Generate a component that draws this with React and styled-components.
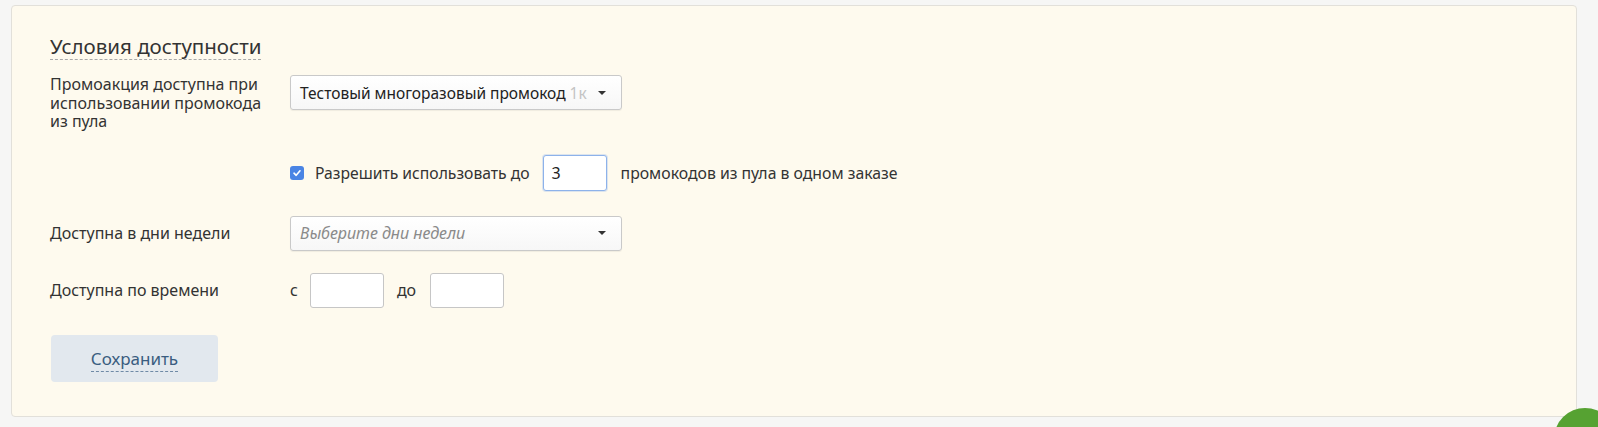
import React from "react";
import styled, { createGlobalStyle } from "styled-components";

const Global = createGlobalStyle`
  html, body { margin: 0; padding: 0; background: #f6f6f5; }
  body { font-family: "Noto Sans", "Open Sans", sans-serif; color: #333; }
`;

const Page = styled.div`
  padding: 5px 21px 10px 11px;
  position: relative;
  height: 427px;
  box-sizing: border-box;
  overflow: hidden;
`;

const Panel = styled.section`
  background: #fefaee;
  border: 1px solid #e2e0da;
  border-radius: 4px;
  height: 412px;
  box-sizing: border-box;
  padding: 27px 37px 0 38px;
`;

const Title = styled.h2`
  margin: 0;
  font-size: 20.5px;
  font-weight: 400;
  line-height: 26px;
  color: #333;
  display: inline-block;
  border-bottom: 1px dashed #a8a8a8;
`;

const Row = styled.div`
  display: flex;
  align-items: ${(p) => (p.$top ? "flex-start" : "center")};
  margin-top: ${(p) => p.$mt}px;
`;

const Label = styled.div`
  width: 240px;
  flex: none;
  font-size: 16px;
  line-height: 18.5px;
  color: #333;
`;

const Select = styled.div`
  width: 332px;
  height: 35px;
  box-sizing: border-box;
  background: linear-gradient(#ffffff, #f7f7f7);
  border: 1px solid #c9c9c9;
  border-radius: 3px;
  box-shadow: 0 1px 1px rgba(0, 0, 0, 0.06);
  display: flex;
  align-items: center;
  padding: 0 15px 0 9px;
  font-size: ${(p) => (p.$placeholder ? "16px" : "15.5px")};
  color: ${(p) => (p.$placeholder ? "#8a8a8a" : "#222")};
  font-style: ${(p) => (p.$placeholder ? "italic" : "normal")};
`;

const SelectText = styled.span`
  flex: 1;
  white-space: nowrap;
`;

const Faded = styled.span`
  color: #c4c4c4;
`;

const Caret = styled.span`
  width: 0;
  height: 0;
  border-left: 4px solid transparent;
  border-right: 4px solid transparent;
  border-top: 4px solid #333;
  flex: none;
  margin-left: 8px;
`;

const CheckGroup = styled.div`
  display: flex;
  align-items: center;
  margin-left: 240px;
  margin-top: ${(p) => p.$mt}px;
  color: #333;
`;

const Check = styled.span`
  width: 14px;
  height: 14px;
  border-radius: 3px;
  background: #4a84e4;
  display: inline-flex;
  align-items: center;
  justify-content: center;
  margin-right: 11px;
`;

const TextInput = styled.div`
  width: ${(p) => p.$w}px;
  height: ${(p) => p.$h}px;
  box-sizing: border-box;
  background: #fff;
  border: 1px solid ${(p) => (p.$focus ? "#8db2ea" : "#c6c6c6")};
  box-shadow: ${(p) => (p.$focus ? "0 0 0 1px rgba(120,165,235,0.25)" : "none")};
  border-radius: 3px;
  padding: 0 8px;
  display: flex;
  align-items: center;
  font-size: 16px;
  color: #222;
  margin: ${(p) => p.$m || "0"};
`;

const Word = styled.span`
  font-size: ${(p) => p.$size || 16}px;
  color: #333;
`;

const SaveButton = styled.button`
  margin-top: 27px;
  margin-left: 1px;
  width: 167px;
  height: 47px;
  border: none;
  border-radius: 4px;
  background: #e2e8ee;
  font-family: inherit;
  font-size: 17px;
  color: #3a5d80;
  cursor: pointer;
  padding: 0;
`;

const ButtonText = styled.span`
  border-bottom: 1px dashed #6f8aa6;
  padding-bottom: 1px;
`;

const Fab = styled.div`
  position: absolute;
  width: 62px;
  height: 62px;
  border-radius: 50%;
  background: #56a232;
  left: 1554px;
  top: 408px;
`;

export default function App() {
  return (
    <>
      <Global />
      <Page>
        <Panel>
          <Title>Условия доступности</Title>
          <Row $top $mt={15}>
            <Label>
              Промоакция доступна при
              <br />
              использовании промокода
              <br />
              из пула
            </Label>
            <Select>
              <SelectText>
                Тестовый многоразовый промокод <Faded>1к</Faded>
              </SelectText>
              <Caret />
            </Select>
          </Row>
          <CheckGroup $mt={24}>
            <Check>
              <svg width="10" height="10" viewBox="0 0 10 10">
                <path d="M2 5.2 L4.2 7.3 L8 2.8" fill="none" stroke="#fff" strokeWidth="1.6" strokeLinecap="round" strokeLinejoin="round" />
              </svg>
            </Check>
            <Word $size={15.7}>Разрешить использовать до</Word>
            <TextInput $w={64} $h={36} $focus $m="0 14px 0 13px">3</TextInput>
            <Word $size={15.8}>промокодов из пула в одном заказе</Word>
          </CheckGroup>
          <Row $mt={25}>
            <Label>Доступна в дни недели</Label>
            <Select $placeholder>
              <SelectText>Выберите дни недели</SelectText>
              <Caret />
            </Select>
          </Row>
          <Row $mt={22}>
            <Label>Доступна по времени</Label>
            <Word>с</Word>
            <TextInput $w={74} $h={35} $m="0 13px 0 12px" />
            <Word>до</Word>
            <TextInput $w={74} $h={35} $m="0 0 0 14px" />
          </Row>
          <SaveButton>
            <ButtonText>Сохранить</ButtonText>
          </SaveButton>
        </Panel>
        <Fab />
      </Page>
    </>
  );
}
